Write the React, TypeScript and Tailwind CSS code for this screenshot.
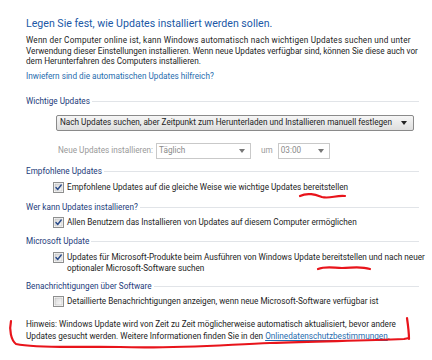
import React from "react";

function Check({ checked = true }: { checked?: boolean }) {
  return (
    <svg width="11" height="11" viewBox="0 0 11 11" className="shrink-0">
      <defs>
        <linearGradient id="cbg" x1="0" y1="0" x2="1" y2="1">
          <stop offset="0" stopColor="#d8d8d8" />
          <stop offset="1" stopColor="#fbfbfb" />
        </linearGradient>
      </defs>
      <rect x="0.5" y="0.5" width="10" height="10" fill="#ffffff" stroke="#8e8f8f" />
      <rect x="2" y="2" width="7" height="7" fill="url(#cbg)" stroke="#b7b7b7" strokeWidth="0.6" />
      {checked && (
        <path d="M3 5.6 L4.7 7.5 L8.2 3" fill="none" stroke="#2d4e8c" strokeWidth="1.5" strokeLinecap="round" strokeLinejoin="round" />
      )}
    </svg>
  );
}

function Section({ label }: { label: string }) {
  return (
    <div className="flex items-center h-[11px] leading-[11px] text-[#1d3b7a]">
      <span className="whitespace-nowrap">{label}</span>
      <div className="flex-1 h-px bg-[#e1e4e8] ml-[2px]" />
    </div>
  );
}

function Arrow({ color = "#222" }: { color?: string }) {
  return (
    <svg width="6" height="4" viewBox="0 0 6 4" className="shrink-0">
      <path d="M0 0 L6 0 L3 4 Z" fill={color} />
    </svg>
  );
}

export default function App() {
  return (
    <div
      className="w-[432px] h-[360px] bg-white relative overflow-hidden text-[8.2px] text-[#1c1c1c] whitespace-nowrap"
      style={{ fontFamily: "Roboto, 'Noto Sans', sans-serif" }}
    >
      <div className="pl-[26px] pr-[13px] pt-[15px]">
        <h1 className="text-[10.6px] h-[18px] leading-[18px] text-[#2058a6]">
          Legen Sie fest, wie Updates installiert werden sollen.
        </h1>
        <p className="mt-[2px] leading-[10.5px]">
          <span className="tracking-[0.2px]">
            Wenn der Computer online ist, kann Windows automatisch nach wichtigen Updates suchen und unter
          </span>
          <br />
          Verwendung dieser Einstellungen installieren. Wenn neue Updates verfügbar sind, können Sie diese auch vor
          <br />
          dem Herunterfahren des Computers installieren.
        </p>
        <div className="mt-[4.5px] h-[10.5px] leading-[10.5px] text-[#1f6cae]">
          Inwiefern sind die automatischen Updates hilfreich?
        </div>

        <div className="mt-[14.5px]">
          <Section label="Wichtige Updates" />
        </div>
        <div className="mt-[7.5px] ml-[30px] mr-[5px] h-[16px] border border-[#8a8a8a] rounded-[2px] bg-gradient-to-b from-[#f6f6f6] to-[#dedede] flex items-center pl-[3px] pr-[6px]">
          <span className="flex-1">
            Nach Updates suchen, aber Zeitpunkt zum Herunterladen und Installieren manuell festlegen
          </span>
          <Arrow />
        </div>
        <div className="mt-[12px] ml-[32px] flex items-center h-[16px] text-[#9a9a9a]">
          <span>Neue Updates installieren:</span>
          <div className="ml-[3px] w-[95px] h-[16px] border border-[#c9c9c9] flex items-center pl-[2px] pr-[5px]">
            <span className="flex-1 text-[#8a8a8a]">Täglich</span>
            <Arrow color="#777" />
          </div>
          <span className="ml-[10px]">um</span>
          <div className="ml-[5px] w-[52px] h-[16px] border border-[#c9c9c9] flex items-center pl-[2px] pr-[5px]">
            <span className="flex-1 text-[#8a8a8a]">03:00</span>
            <Arrow color="#777" />
          </div>
        </div>

        <div className="mt-[7px]">
          <Section label="Empfohlene Updates" />
        </div>
        <div className="mt-[5px] ml-[27px] flex items-center gap-[3px] h-[11px] leading-[11px]">
          <Check />
          <span>Empfohlene Updates auf die gleiche Weise wie wichtige Updates bereitstellen</span>
        </div>

        <div className="mt-[9px]">
          <Section label="Wer kann Updates installieren?" />
        </div>
        <div className="mt-[4.5px] ml-[27px] flex items-center gap-[3px] h-[11px] leading-[11px]">
          <Check />
          <span>Allen Benutzern das Installieren von Updates auf diesem Computer ermöglichen</span>
        </div>

        <div className="mt-[8px]">
          <Section label="Microsoft Update" />
        </div>
        <div className="mt-[5px] ml-[27px] flex items-start gap-[3px] leading-[10.5px]">
          <Check />
          <span>
            Updates für Microsoft-Produkte beim Ausführen von Windows Update bereitstellen und nach neuer
            <br />
            optionaler Microsoft-Software suchen
          </span>
        </div>

        <div className="mt-[8px]">
          <Section label="Benachrichtigungen über Software" />
        </div>
        <div className="mt-[4px] ml-[27px] flex items-center gap-[3px] h-[11px] leading-[11px]">
          <Check checked={false} />
          <span>Detaillierte Benachrichtigungen anzeigen, wenn neue Microsoft-Software verfügbar ist</span>
        </div>

        <p className="mt-[11px] leading-[12px]">
          Hinweis: Windows Update wird von Zeit zu Zeit möglicherweise automatisch aktualisiert, bevor andere
          <br />
          Updates gesucht werden. Weitere Informationen finden Sie in den{" "}
          <span className="text-[#1f6cae] underline">Onlinedatenschutzbestimmungen</span>.
        </p>
      </div>

      <svg className="absolute inset-0 pointer-events-none" width="432" height="360" viewBox="0 0 432 360">
        <g fill="none" stroke="#e8141b" strokeWidth="2.2" strokeLinecap="round" strokeLinejoin="round">
          <path d="M300 196 C308 192 316 195 322 197 C330 199 336 195 345 196" />
          <path d="M318 269 C326 266 334 268 342 268 C352 268 360 266 370 269" />
          <path d="M11 321 C9 330 11 340 16 344 C40 349 80 346 120 347 C170 349 220 345 270 343 C320 341 360 341 404 339 L409 338" />
          <path d="M407 318 C408 325 409 332 409 339" />
        </g>
      </svg>
    </div>
  );
}
